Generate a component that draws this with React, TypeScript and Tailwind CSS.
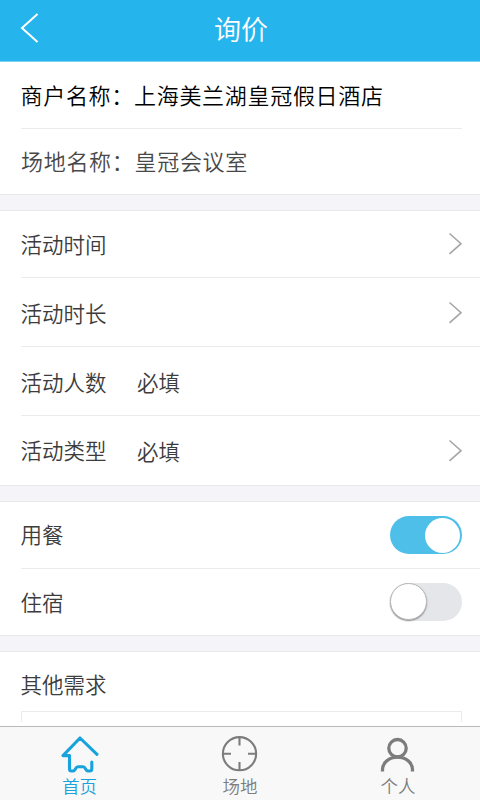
import React from 'react';
import clsx from 'clsx';

const Chevron = ({ className }: { className?: string }) => (
  <svg className={clsx('-mr-px block h-6 w-4 shrink-0', className)} viewBox="0 0 16 24" fill="none" stroke="#a6a6a6" strokeWidth="1.6">
    <path d="M2.500 1.500 14 11.700 2.500 21.900" />
  </svg>
);

const Gap = () => <div className="h-[17px] shrink-0 border-y border-[#e8e8ea] bg-[#f4f4f9]" />;

const Toggle = ({ on }: { on: boolean }) => (
  <div
    className={clsx(
      'flex h-[38px] w-[72px] rounded-full',
      on ? 'items-center justify-end bg-[#4dbfe8] pr-0.5' : 'items-start justify-start bg-[#e5e6ea]',
    )}
  >
    <div
      className={clsx(
        'rounded-full bg-white',
        on ? 'size-[35px]' : 'size-[37px] border border-[#b9b9bb] shadow-[0_1px_1.5px_#8b8b8b]',
      )}
    />
  </div>
);

type RowProps = {
  label: string;
  value?: string;
  className: string;
  labelClassName?: string;
  children?: React.ReactNode;
};

const Row = ({ label, value, className, labelClassName, children }: RowProps) => (
  <div className={clsx('ml-[21px] flex items-center pr-[18px] text-[21.5px] leading-8', className)}>
    <span className={clsx('-ml-[0.5px] w-[116.5px]', labelClassName)}>{label}</span>
    <span className="flex-1">{value}</span>
    {children}
  </div>
);

const HomeIcon = () => (
  <svg className="block h-10 w-11" viewBox="0 0 44 40" fill="none" stroke="#18a3dc" strokeWidth="3.1" strokeLinecap="round" strokeLinejoin="round">
    <path d="M39 19.300 22 3 5 20.600h6.500v13.400q0 2 2 2h1.500c2.600 0 2.200-4.300 5-4.300h5c2.800 0 2.400 4.300 5 4.300h1.500q2.300 0 2.300-2v-7" />
  </svg>
);

const VenueIcon = () => (
  <svg className="block h-10 w-11" viewBox="0 0 44 40" fill="none" stroke="#7c7c7c" strokeWidth="2.100">
    <circle cx="21.500" cy="18.700" r="16.600" />
    <path d="M21.500 2v8.500M21.500 27v8.500M4.500 18.700H13M30 18.700h8.500" />
  </svg>
);

const PersonIcon = () => (
  <svg className="block h-10 w-11" viewBox="0 0 44 40" fill="none" stroke="#7c7c7c" strokeWidth="3.300">
    <circle cx="21.500" cy="13.200" r="8.700" />
    <path d="M6.500 36.500v-1.500c0-7.300 6.700-12.800 15-12.800s15 5.500 15 12.800v1.500" />
  </svg>
);

const tabs = [
  { label: '首页', icon: <HomeIcon />, className: 'pr-px text-[#18a3dc]' },
  { label: '场地', icon: <VenueIcon />, className: 'text-[#7c7c7c]' },
  { label: '个人', icon: <PersonIcon />, className: 'pr-1 text-[#7c7c7c]' },
];

export default function App() {
  return (
    <div className="flex h-[800px] w-[480px] flex-col overflow-hidden bg-white font-['Noto_Sans_CJK_SC',sans-serif] font-[350] text-[#3c3c3c]">
      {/* Header */}
      <header className="grid h-[62px] shrink-0 grid-cols-[80px_1fr_80px] items-center border-b border-[#7bd0f3] bg-[#26b4ed] text-white">
        <svg className="ml-5 block h-8 w-5 -translate-y-0.5" viewBox="0 0 20 32" fill="none" stroke="currentColor" strokeWidth="2">
          <path d="M17.500 1 2 15l15.500 14" />
        </svg>
        <h1 className="-mt-1 pl-0.5 text-center text-[27px] leading-10">询价</h1>
      </header>

      {/* Merchant and venue */}
      <section className="shrink-0 pr-[18px] pl-[21px] text-[22px] leading-8 tracking-[0.700px]">
        <div className="flex h-[67px] items-center border-b border-[#ebebeb] text-black">
          <p className="-mt-0.5 -ml-[0.5px] whitespace-nowrap">商户名称：上海美兰湖皇冠假日酒店</p>
        </div>
        <div className="flex h-[65px] items-center">
          <p className="-mt-1 text-[#484848]">场地名称：皇冠会议室</p>
        </div>
      </section>

      <Gap />

      {/* Event details */}
      <section className="shrink-0">
        <Row label="活动时间" className="h-[67px] border-b border-[#ebebeb]" labelClassName="-mt-px">
          <Chevron />
        </Row>
        <Row label="活动时长" className="h-[69px] border-b border-[#ebebeb]" labelClassName="mt-px">
          <Chevron className="mt-px" />
        </Row>
        <Row label="活动人数" value="必填" className="h-[69px] border-b border-[#ebebeb] pt-px" />
        <Row label="活动类型" value="必填" className="h-[69px]" labelClassName="-mt-0.5">
          <Chevron />
        </Row>
      </section>

      <Gap />

      {/* Extras */}
      <section className="shrink-0">
        <Row label="用餐" className="h-[67px] border-b border-[#ebebeb]" labelClassName="-mt-0.5">
          <Toggle on />
        </Row>
        <Row label="住宿" className="h-[66px]">
          <Toggle on={false} />
        </Row>
      </section>

      <Gap />

      <section className="h-[74px] shrink-0 pr-[18px] pl-[21px]">
        <p className="-ml-[0.5px] flex h-[59px] items-center pt-1 text-[21.5px] leading-8">其他需求</p>
        <div className="h-[11px] border border-b-0 border-[#ebebeb]" />
      </section>

      {/* Tab bar */}
      <nav className="grid flex-1 grid-cols-3 border-t border-[#b9b9b9] bg-[#f8f8f8]">
        {tabs.map((tab) => (
          <div key={tab.label} className={clsx('flex flex-col items-center pt-2 text-[17.500px]', tab.className)}>
            {tab.icon}
            <span className="-mt-px leading-6">{tab.label}</span>
          </div>
        ))}
      </nav>
    </div>
  );
}
